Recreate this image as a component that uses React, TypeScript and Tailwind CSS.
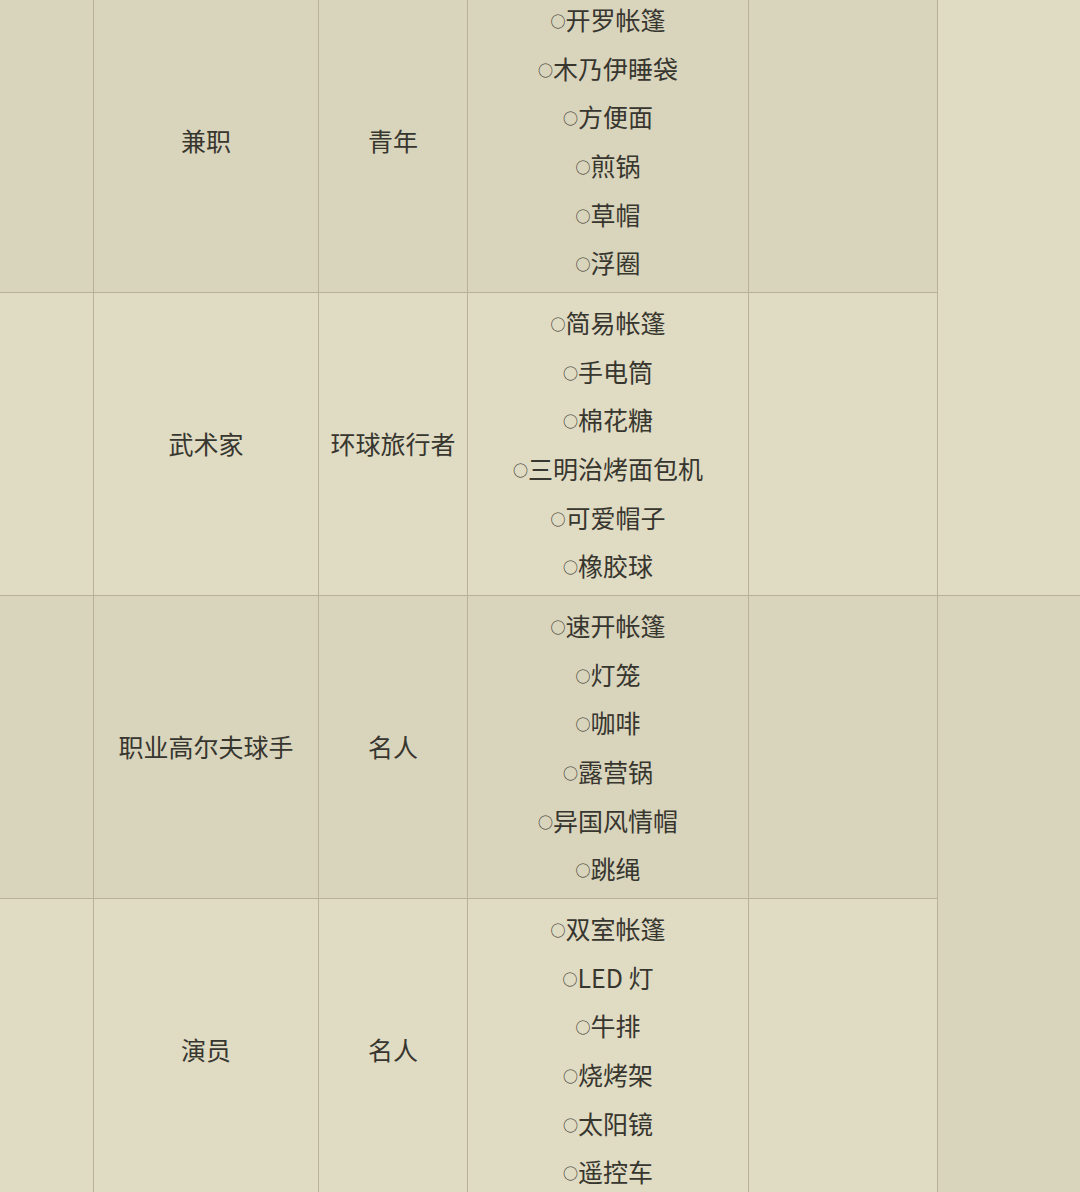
const rows = [
  {
    job: "兼职",
    tag: "青年",
    items: ["开罗帐篷", "木乃伊睡袋", "方便面", "煎锅", "草帽", "浮圈"],
  },
  {
    job: "武术家",
    tag: "环球旅行者",
    items: ["简易帐篷", "手电筒", "棉花糖", "三明治烤面包机", "可爱帽子", "橡胶球"],
  },
  {
    job: "职业高尔夫球手",
    tag: "名人",
    items: ["速开帐篷", "灯笼", "咖啡", "露营锅", "异国风情帽", "跳绳"],
  },
  {
    job: "演员",
    tag: "名人",
    items: ["双室帐篷", "LED 灯", "牛排", "烧烤架", "太阳镜", "遥控车"],
  },
];

const cell = "border border-[#b6b09c] p-0 text-center align-middle";

export default function App() {
  return (
    <div
      className="h-[1192px] w-[1080px] overflow-hidden bg-[#e0dbc3] text-[25px] text-[#37362f]"
      style={{ fontFamily: '"Noto Sans CJK SC", "Noto Sans", sans-serif' }}
    >
      <table className="-mt-[11px] -ml-[2px] w-[1200px] table-fixed border-collapse">
        <colgroup>
          <col className="w-[95px]" />
          <col className="w-[225px]" />
          <col className="w-[149px]" />
          <col className="w-[281px]" />
          <col className="w-[189px]" />
          <col className="w-[261px]" />
        </colgroup>
        <tbody>
          {rows.map((row, i) => {
            const bg = i % 2 === 0 ? "bg-[#d9d4bc]" : "bg-[#e0dbc3]";
            return (
              <tr key={row.job} className={bg}>
                <td className={`${cell} h-[303px]`} />
                <td className={cell}>{row.job}</td>
                <td className={cell}>{row.tag}</td>
                <td className={`${cell} pt-[5px] pb-[5px]`}>
                  {row.items.map((item) => (
                    <div key={item} className="h-[48.6px] leading-[48.6px] whitespace-nowrap">
                      <span className="align-[3px] text-[15px] leading-none">○</span>
                      {item}
                    </div>
                  ))}
                </td>
                <td className={cell} />
                {i % 2 === 0 && (
                  <td
                    rowSpan={2}
                    className={`${cell} ${i === 0 ? "bg-[#e0dbc3]" : "bg-[#d9d4bc]"}`}
                  />
                )}
              </tr>
            );
          })}
        </tbody>
      </table>
    </div>
  );
}
